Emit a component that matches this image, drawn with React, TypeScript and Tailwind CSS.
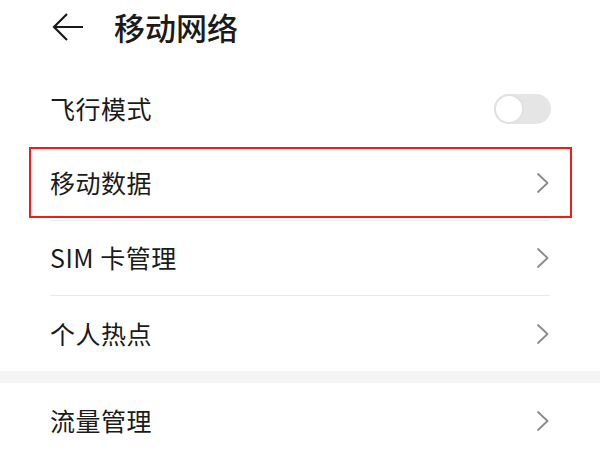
import { ReactNode } from "react"

const font = { fontFamily: '"Noto Sans CJK SC", "Noto Sans", sans-serif' }

const Chevron = () => (
  <svg width="14" height="22" viewBox="0 0 14 22" fill="none" className="shrink-0">
    <path d="M2 2 L11.5 11 L2 20" stroke="#8a8a8a" strokeWidth="1.8" strokeLinecap="round" strokeLinejoin="round" />
  </svg>
)

const Row = ({ label, right, divider = true }: { label: string; right: ReactNode; divider?: boolean }) => (
  <div className="px-[50px]">
    <div className={`h-[75px] flex items-center justify-between ${divider ? "border-b border-[#e9e9e9]" : ""}`}>
      <span className="text-[25px] text-[#1a1a1a] tracking-[0.5px]">{label}</span>
      {right}
    </div>
  </div>
)

const Toggle = () => (
  <div className="w-[57px] h-[30px] rounded-full bg-[#e5e5e5] flex items-center mr-[-1px]">
    <div className="w-[30px] h-[30px] rounded-full bg-white border-[2px] border-[#e1e1e1]" />
  </div>
)

export default function App() {
  return (
    <div className="w-[600px] h-[450px] bg-white overflow-hidden relative" style={font}>
      {/* header */}
      <div className="h-[54px] flex items-center pl-[52px] gap-[30px]">
        <svg width="32" height="30" viewBox="0 0 32 30" fill="none">
          <path d="M15 2 L2 15 L15 28 M2 15 H31" stroke="#1a1a1a" strokeWidth="2.2" strokeLinejoin="miter" />
        </svg>
        <span className="text-[31px] text-[#1a1a1a] font-medium">移动网络</span>
      </div>
      <div className="h-[17px]" />

      <Row label="飞行模式" right={<Toggle />} divider={false} />
      <div className="relative">
        <Row label="移动数据" right={<Chevron />} />
        {/* red highlight box */}
        <div className="absolute left-[29px] right-[28px] top-[1px] h-[71px] border-2 border-[#f21b1b]" />
      </div>
      <Row label="SIM 卡管理" right={<Chevron />} />
      <Row label="个人热点" right={<Chevron />} divider={false} />

      <div className="h-[12px] bg-[#f4f4f4]" />

      <Row label="流量管理" right={<Chevron />} divider={false} />
    </div>
  )
}
